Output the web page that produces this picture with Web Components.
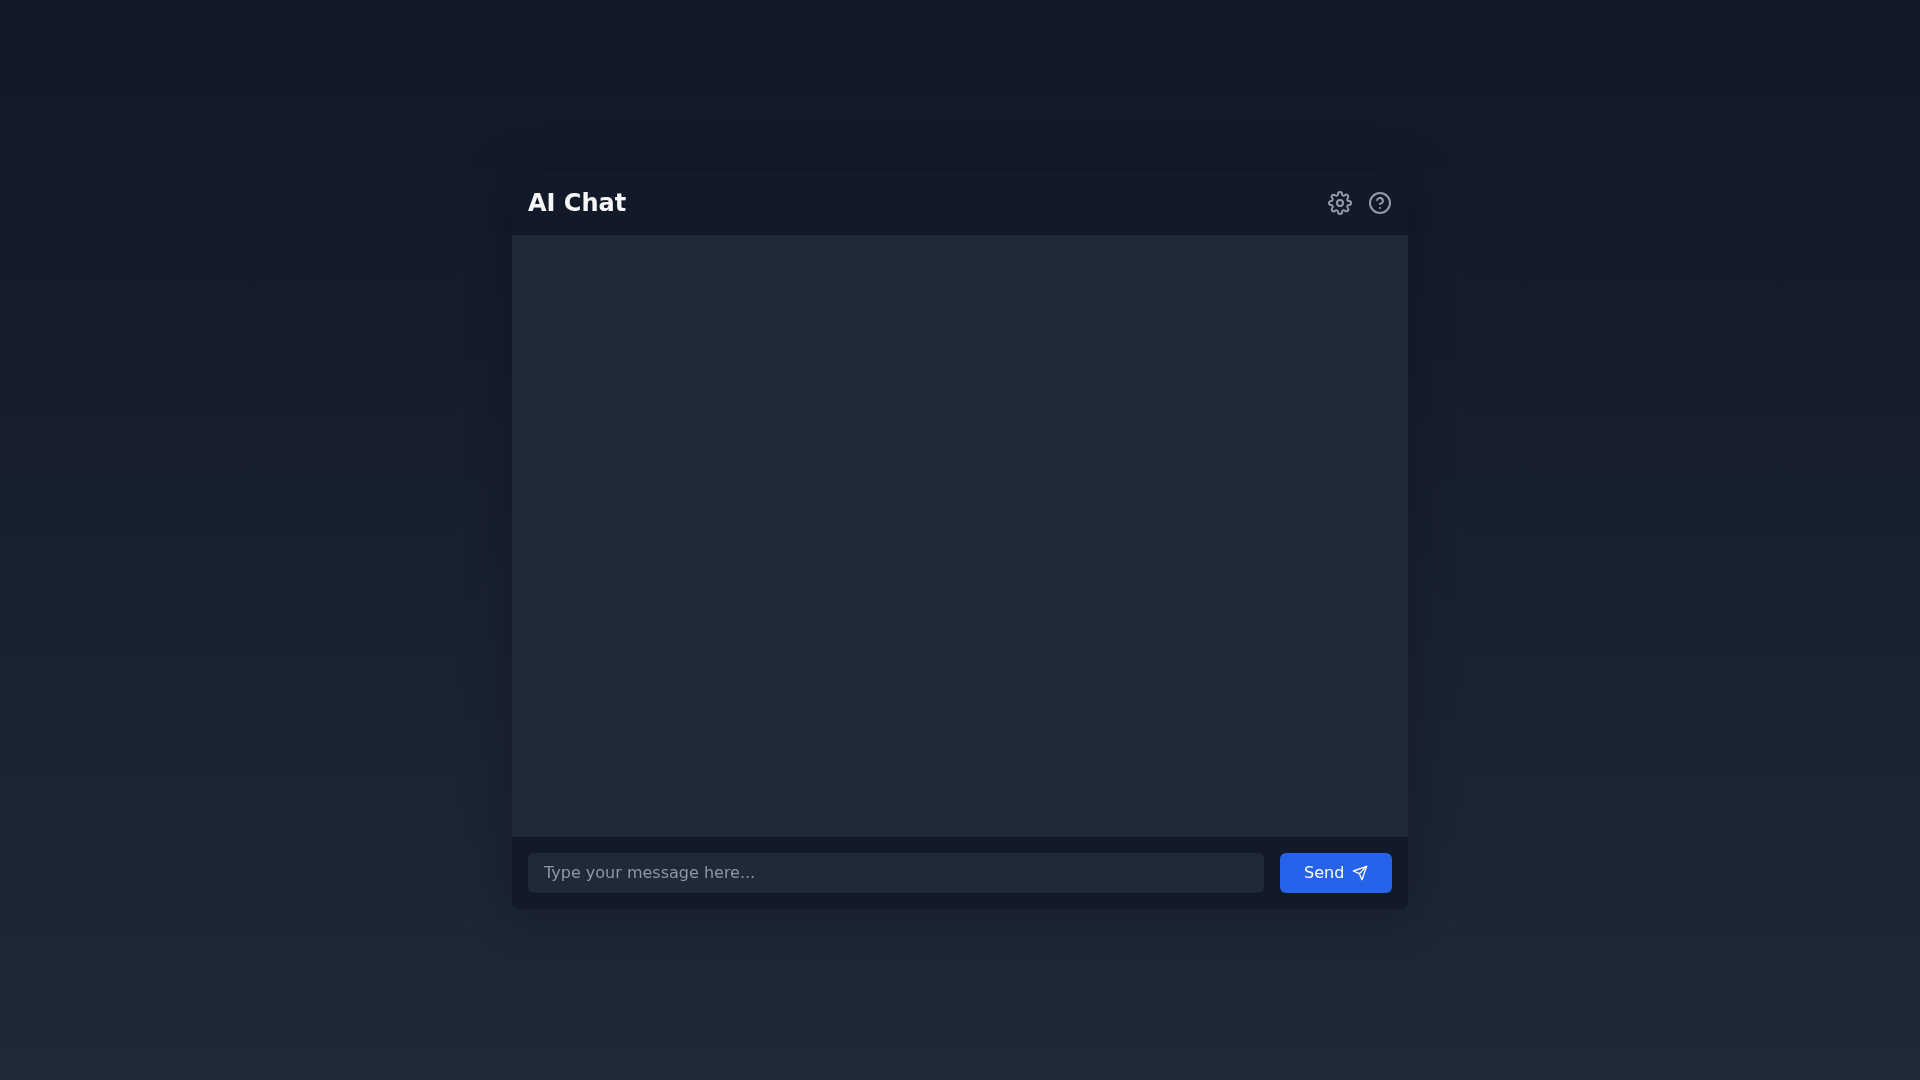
<!DOCTYPE html>
<html lang="en"><head><meta charset="utf-8"><title>AI Chat</title>
<style>
html,body{margin:0;height:100%}
body{font-family:"DejaVu Sans",sans-serif;background:linear-gradient(to bottom,#111827,#1f2937);}
</style></head><body>
<chat-app>
  <chat-header slot="header" title-text="AI Chat"></chat-header>
  <chat-messages slot="messages"></chat-messages>
  <chat-composer slot="composer"></chat-composer>
</chat-app>
<script>
function comp(name,html,init){customElements.define(name,class extends HTMLElement{
  constructor(){super();this.attachShadow({mode:'open'}).innerHTML=html;}
  connectedCallback(){if(init)init(this);}
});}
comp('chat-app',`<style>
:host{display:flex;height:100vh;align-items:center;justify-content:center}
.card{width:896px;height:738px;display:flex;flex-direction:column;background:#121a29;border-radius:8px;overflow:hidden;box-shadow:0 5px 50px rgba(0,0,0,.27);will-change:transform}
</style><div class="card"><slot name="header"></slot><slot name="messages"></slot><slot name="composer"></slot></div>`);
comp('icon-button',`<style>
:host{display:block;width:24px;height:24px;color:#939aa8;cursor:pointer}
svg{display:block}
</style><svg width="24" height="24" viewBox="0 0 24 24" fill="none" stroke="currentColor" stroke-width="2" stroke-linecap="round" stroke-linejoin="round"></svg>`,el=>{
  const s=el.shadowRoot.querySelector('svg');
  s.innerHTML=el.getAttribute('icon')==='gear'
   ?'<circle cx="12" cy="12" r="3"/><path d="M19.4 15a1.65 1.65 0 0 0 .33 1.82l.06.06a2 2 0 0 1 0 2.83 2 2 0 0 1-2.83 0l-.06-.06a1.65 1.65 0 0 0-1.82-.33 1.65 1.65 0 0 0-1 1.51V21a2 2 0 0 1-2 2 2 2 0 0 1-2-2v-.09A1.65 1.65 0 0 0 9 19.4a1.65 1.65 0 0 0-1.82.33l-.06.06a2 2 0 0 1-2.83 0 2 2 0 0 1 0-2.83l.06-.06a1.65 1.65 0 0 0 .33-1.82 1.65 1.65 0 0 0-1.51-1H3a2 2 0 0 1-2-2 2 2 0 0 1 2-2h.09A1.65 1.65 0 0 0 4.6 9a1.65 1.65 0 0 0-.33-1.82l-.06-.06a2 2 0 0 1 0-2.83 2 2 0 0 1 2.83 0l.06.06a1.65 1.65 0 0 0 1.82.33H9a1.65 1.65 0 0 0 1-1.51V3a2 2 0 0 1 2-2 2 2 0 0 1 2 2v.09a1.65 1.65 0 0 0 1 1.51 1.65 1.65 0 0 0 1.82-.33l.06-.06a2 2 0 0 1 2.83 0 2 2 0 0 1 0 2.83l-.06.06a1.65 1.65 0 0 0-.33 1.82V9a1.65 1.65 0 0 0 1.51 1H21a2 2 0 0 1 2 2 2 2 0 0 1-2 2h-.09a1.65 1.65 0 0 0-1.51 1z"/>'
   :'<circle cx="12" cy="12" r="10"/><path d="M9.09 9a3 3 0 0 1 5.83 1c0 2-3 3-3 3"/><path d="M12 17h.01"/>';
});
comp('chat-header',`<style>
:host{display:flex;align-items:center;justify-content:space-between;padding:16px;height:32px;flex:none}
h1{margin:0;font-size:24px;line-height:32px;font-weight:700;color:#f6f7f9}
.icons{display:flex;gap:16px}
</style><h1></h1><div class="icons"><icon-button icon="gear"></icon-button><icon-button icon="help"></icon-button></div>`,el=>{
  el.shadowRoot.querySelector('h1').textContent=el.getAttribute('title-text');
});
comp('chat-messages',`<style>:host{display:block;flex:1;background:#1f2937;overflow-y:auto}</style><slot></slot>`);
comp('chat-composer',`<style>
:host{display:flex;gap:16px;padding:16px;flex:none}
input{flex:1;min-width:0;height:40px;box-sizing:border-box;border:0;outline:0;border-radius:6px;background:#1f2937;color:#fff;padding:7px 16px 9px;font:16px "DejaVu Sans",sans-serif}
input::placeholder{color:#8f96a5;opacity:1}
button{flex:none;display:flex;align-items:center;gap:8px;height:40px;width:112px;box-sizing:border-box;border:0;border-radius:6px;background:#2563eb;color:#fff;padding:8px 24px;font:16px/24px "DejaVu Sans",sans-serif;cursor:pointer}
svg{display:block;flex:none}
</style><input type="text" placeholder="Type your message here..."><button>Send<svg width="16" height="16" viewBox="0 0 24 24" fill="none" stroke="currentColor" stroke-width="2" stroke-linecap="round" stroke-linejoin="round"><path d="m22 2-7 20-4-9-9-4Z"/><path d="M22 2 11 13"/></svg></button>`);
</script>
</body></html>
